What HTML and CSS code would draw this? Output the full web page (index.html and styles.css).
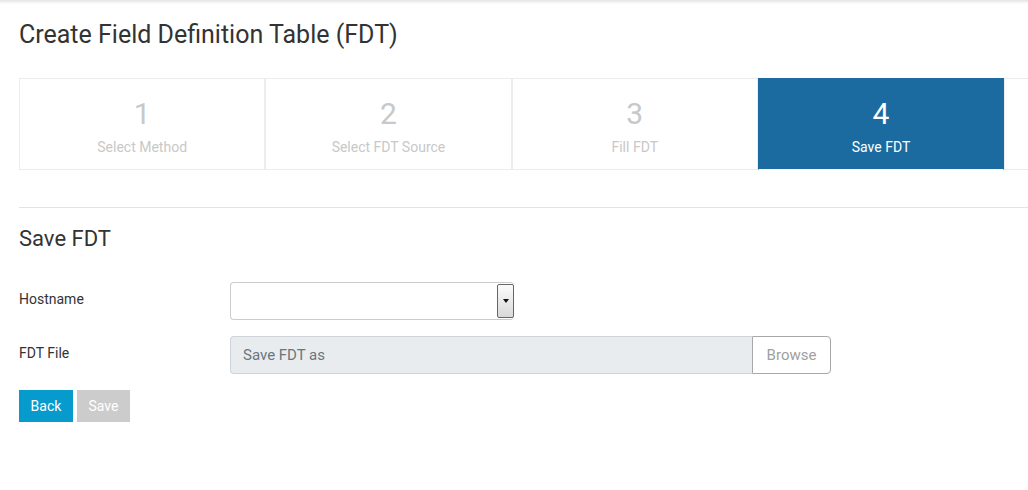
FILE: index.html
```html
<!DOCTYPE html>
<html>
<head>
<meta charset="utf-8">
<link rel="stylesheet" href="styles.css">
</head>
<body>
<div class="topshade"></div>
<main class="page">
  <h1 class="title">Create Field Definition Table (FDT)</h1>
  <div class="steps">
    <div class="step"><div class="num">1</div><div class="lbl">Select Method</div></div>
    <div class="step"><div class="num">2</div><div class="lbl">Select FDT Source</div></div>
    <div class="step"><div class="num">3</div><div class="lbl">Fill FDT</div></div>
    <div class="step active"><div class="num">4</div><div class="lbl">Save FDT</div></div>
    <div class="step rest"></div>
  </div>
  <hr class="rule">
  <h2 class="subtitle">Save FDT</h2>
  <div class="form">
    <div class="row">
      <label class="label">Hostname</label>
      <div class="select">
        <span class="dd"><span class="tri"></span></span>
      </div>
    </div>
    <div class="row">
      <label class="label">FDT File</label>
      <div class="file">
        <span class="fileinput">Save FDT as</span>
        <span class="browse">Browse</span>
      </div>
    </div>
    <div class="actions">
      <button class="btn back">Back</button>
      <button class="btn save">Save</button>
    </div>
  </div>
</main>
</body>
</html>
```
FILE: styles.css
```css
html, body {
  margin: 0;
  padding: 0;
  background: #fff;
  overflow: hidden;
  font-family: Roboto, "Liberation Sans", sans-serif;
  color: #333;
}
.topshade {
  height: 4px;
  background: linear-gradient(to bottom, #e4e4e4, #fff);
}
.page {
  padding: 0 0 0 19px;
}
.title {
  margin: 14px 0 0;
  font-size: 25px;
  line-height: 34px;
  font-weight: 400;
  color: #333;
}
.steps {
  margin-top: 26px;
  display: flex;
  width: 1240px;
}
.step {
  box-sizing: border-box;
  flex: 0 0 246.3px;
  height: 92px;
  border: 1px solid #ececec;
  text-align: center;
  color: #c8c8c8;
  padding-top: 18px;
}
.step.active {
  background: #1b6ba0;
  border-color: #1b6ba0;
  border-bottom-color: #fff;
  color: #fff;
}
.step.rest {
  border-right: none;
  flex-basis: 250px;
}
.num {
  font-size: 30px;
  line-height: 34px;
}
.lbl {
  font-size: 14px;
  line-height: 16px;
  margin-top: 8px;
}
.rule {
  border: none;
  border-top: 1px solid #e3e3e3;
  margin: 37px 0 0;
}
.subtitle {
  margin: 16px 0 0;
  font-size: 22px;
  line-height: 30px;
  font-weight: 400;
  color: #333;
}
.form {
  margin-top: 28px;
  display: flex;
  flex-direction: column;
  gap: 16px;
}
.row {
  display: flex;
  align-items: center;
}
.label {
  width: 211px;
  font-size: 14px;
  line-height: 16px;
  margin-top: -4px;
  color: #333;
}
.select {
  box-sizing: border-box;
  width: 284px;
  height: 38px;
  border: 1px solid #ccc;
  border-right: none;
  border-radius: 4px;
  display: flex;
  justify-content: flex-end;
  padding: 1px 0 1px 1px;
}
.dd {
  box-sizing: border-box;
  width: 17px;
  height: 100%;
  border: 1px solid #666;
  border-radius: 2px;
  background: linear-gradient(to bottom, #fbfbfb, #d9d9d9);
  display: flex;
  align-items: center;
  justify-content: center;
}
.tri {
  width: 0;
  height: 0;
  border-left: 3.5px solid transparent;
  border-right: 3.5px solid transparent;
  border-top: 4px solid #111;
}
.file {
  display: flex;
  height: 38px;
}
.fileinput {
  box-sizing: border-box;
  width: 522px;
  height: 38px;
  background: #e9ecef;
  border: 1px solid #ced4da;
  border-radius: 4px 0 0 4px;
  border-right: none;
  padding-left: 12px;
  font-size: 15px;
  line-height: 36px;
  color: #6c757d;
}
.browse {
  box-sizing: border-box;
  width: 79px;
  height: 38px;
  border: 1px solid #a8a8a8;
  border-radius: 0 4px 4px 0;
  text-align: center;
  font-size: 15px;
  line-height: 36px;
  color: #a0a0a0;
  background: #fff;
}
.actions {
  display: flex;
  gap: 4px;
}
.btn {
  border: none;
  height: 32px;
  font-family: Roboto, "Liberation Sans", sans-serif;
  font-size: 14px;
  color: #fff;
  padding: 0;
  cursor: pointer;
}
.back {
  width: 54px;
  background: #079bcd;
}
.save {
  width: 53px;
  background: #cccccc;
}
```
